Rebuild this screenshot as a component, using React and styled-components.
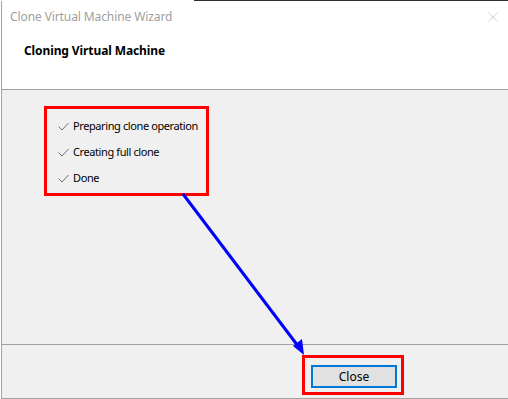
import React from "react";
import styled, { createGlobalStyle } from "styled-components";

const Global = createGlobalStyle`
  html, body { margin: 0; padding: 0; background: #ffffff; }
  body { font-family: "Noto Sans", "Open Sans", sans-serif; }
`;

const steps = ["Preparing clone operation", "Creating full clone", "Done"];

const Frame = styled.div`
  position: relative;
  width: 508px;
  height: 399px;
  overflow: hidden;
  background: #ffffff;
  display: flex;
  flex-direction: column;
`;

const Fringe = styled.div`
  height: 1px;
  flex-shrink: 0;
  background: linear-gradient(to right, #ffffff 0, #ffffff 194px, #2f2f2f 194px);
`;

const Window = styled.div`
  flex: 1;
  margin-left: 1px;
  display: flex;
  flex-direction: column;
  border-left: 1px solid #a3a3a3;
  border-bottom: 1px solid #a3a3a3;
  min-height: 0;
`;

const TitleBar = styled.div`
  height: 29px;
  flex-shrink: 0;
  display: flex;
  align-items: center;
  justify-content: space-between;
  padding: 2px 10px 0 8px;
  box-sizing: border-box;
  background: #ffffff;
`;

const Title = styled.span`
  font-size: 12px;
  color: #a0a0a0;
  letter-spacing: -0.1px;
`;

const Header = styled.div`
  height: 60px;
  flex-shrink: 0;
  background: #ffffff;
  border-bottom: 1px solid #a0a0a0;
  padding: 12px 0 0 22px;
  box-sizing: border-box;
`;

const Heading = styled.h1`
  margin: 0;
  font-size: 12px;
  font-weight: 700;
  color: #000000;
  letter-spacing: -0.1px;
`;

const Body = styled.div`
  flex: 1;
  background: #f0f0f0;
  border-bottom: 1px solid #a0a0a0;
  padding: 16px 0 0 42px;
`;

const StepList = styled.ul`
  list-style: none;
  margin: 0;
  padding: 3px 0 0 11px;
  width: 148px;
  height: 81px;
  border: 3px solid #ff0000;
`;

const Step = styled.li`
  height: 26px;
  display: flex;
  align-items: center;
  gap: 4px;
  font-size: 11px;
  letter-spacing: -0.4px;
  color: #000000;
  white-space: nowrap;

  svg {
    flex-shrink: 0;
    margin-top: 2px;
  }
`;

const Footer = styled.div`
  height: 53px;
  flex-shrink: 0;
  background: #f0f0f0;
  display: flex;
  justify-content: flex-end;
  align-items: flex-start;
  padding: 10px 104px 0 0;
  box-sizing: border-box;
`;

const Highlight = styled.div`
  border: 3px solid #ff0000;
  padding: 6px 4px 4px 6px;
`;

const Button = styled.button`
  width: 86px;
  height: 23px;
  margin: 0;
  padding: 0;
  font-family: inherit;
  font-size: 12px;
  color: #000000;
  background: #e1e1e1;
  border: 2px solid #0078d7;
`;

const Overlay = styled.svg`
  position: absolute;
  left: 0;
  top: 0;
  pointer-events: none;
`;

function Check() {
  return (
    <svg width="11" height="9" viewBox="0 0 11 9">
      <path d="M0.5 4.5 L4 8 L10.5 1" fill="none" stroke="#6b747c" strokeWidth="1" />
    </svg>
  );
}

export default function App() {
  return (
    <>
      <Global />
      <Frame>
        <Fringe />
        <Window>
          <TitleBar>
            <Title>Clone Virtual Machine Wizard</Title>
            <svg width="10" height="10" viewBox="0 0 10 10">
              <path d="M0.5 0.5 L9.5 9.5 M9.5 0.5 L0.5 9.5" stroke="#d2d2d2" strokeWidth="1" />
            </svg>
          </TitleBar>
          <Header>
            <Heading>Cloning Virtual Machine</Heading>
          </Header>
          <Body>
            <StepList>
              {steps.map((s) => (
                <Step key={s}>
                  <Check />
                  <span>{s}</span>
                </Step>
              ))}
            </StepList>
          </Body>
          <Footer>
            <Highlight>
              <Button>Close</Button>
            </Highlight>
          </Footer>
        </Window>
        <Overlay width="508" height="399" viewBox="0 0 508 399">
          <line x1="183" y1="194" x2="298" y2="346" stroke="#0000ff" strokeWidth="3" />
          <polygon points="304,355 293,346 302,339" fill="#0000ff" />
        </Overlay>
      </Frame>
    </>
  );
}
